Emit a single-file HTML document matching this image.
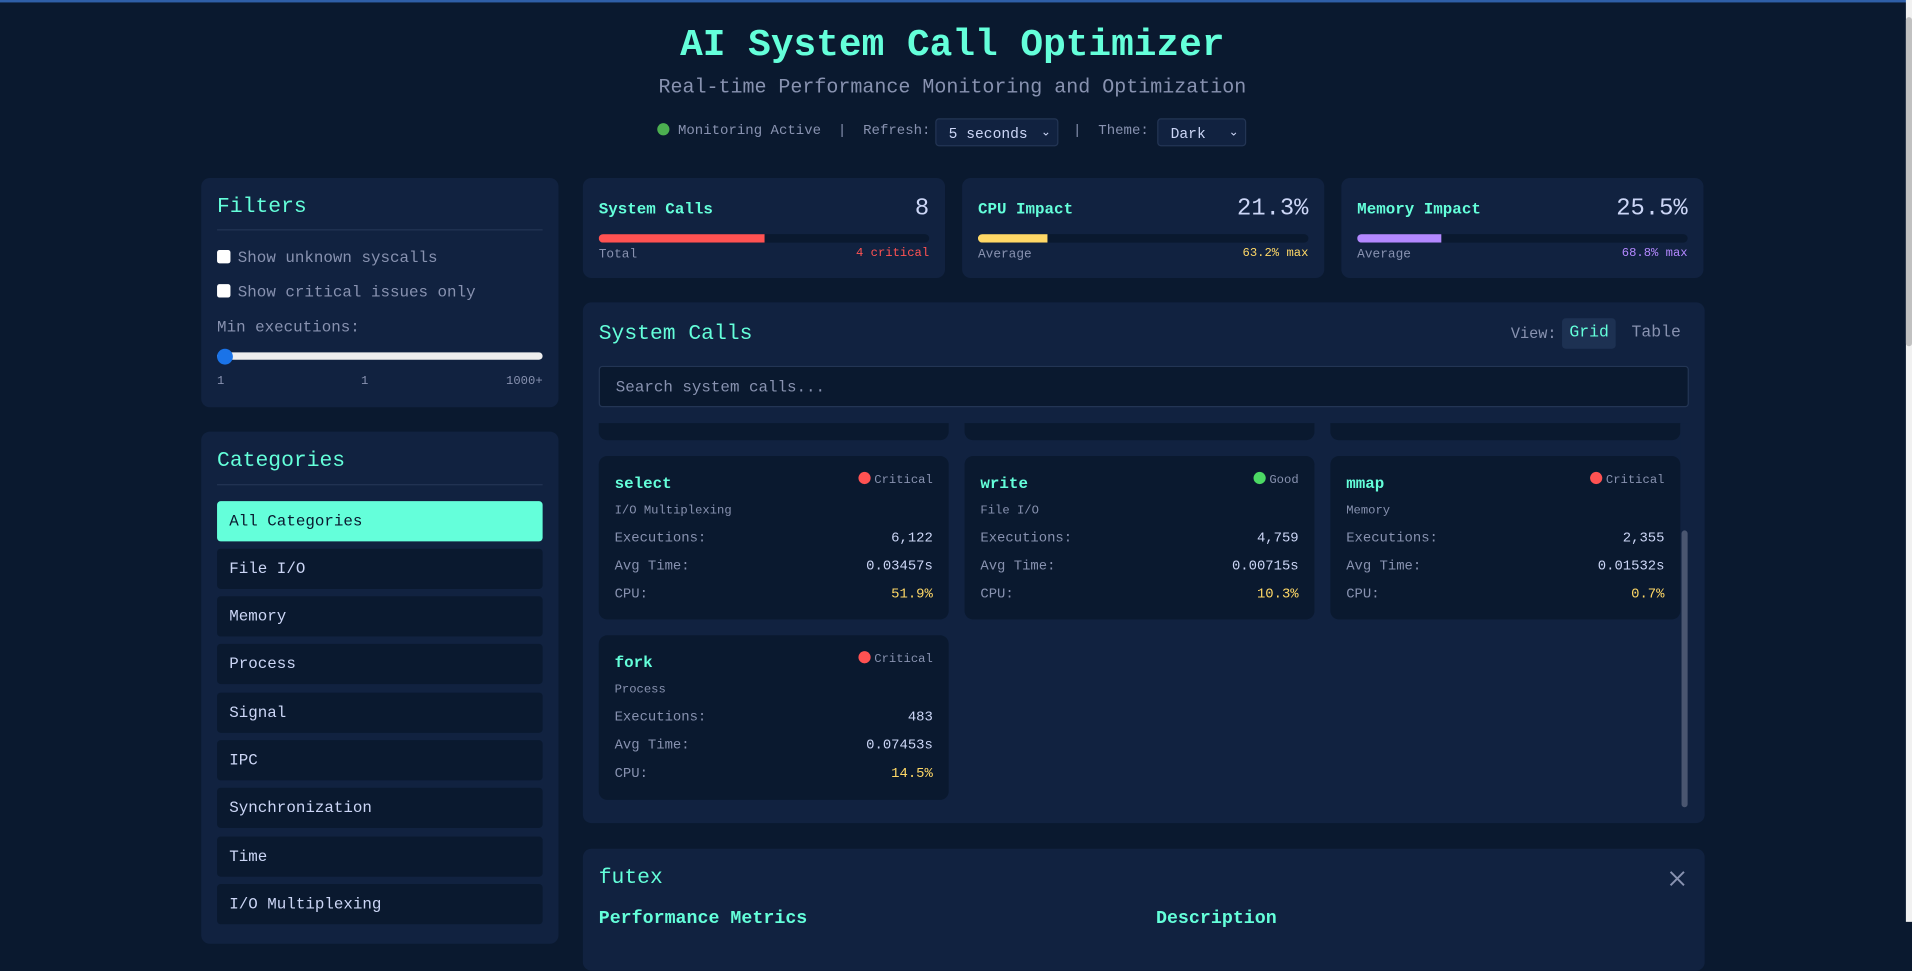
<!DOCTYPE html>
<html><head><meta charset="utf-8"><style>
*{box-sizing:border-box;margin:0;padding:0}
html,body{width:1912px;height:922px;overflow:hidden;background:#0a192f}
#w{position:absolute;left:0;top:0;width:1568px;height:756px;transform:scale(1.219388);transform-origin:0 0;font-family:"Liberation Mono",monospace;color:#ccd6f6}
.a{position:absolute}
.p{position:absolute;background:#112240;border-radius:7px}
.acc{color:#64ffda}
.mut{color:#8892b0}
.sel{position:absolute;background:#112240;border:1px solid #233554;border-radius:3px;font-size:12px;color:#ccd6f6;padding:5px 10px}
.cat{position:absolute;left:13px;width:267px;height:33px;background:#0a192f;border-radius:3px;font-size:13px;padding:9px 10px;color:#ccd6f6}
.card{position:absolute;width:287px;background:#0a192f;border-radius:7px;overflow:hidden}
.nm{position:absolute;left:13px;top:15px;font-size:13px;font-weight:bold;color:#64ffda}
.st{position:absolute;right:13px;top:13px;font-size:10px;color:#8892b0}
.dot{display:inline-block;width:10px;height:10px;border-radius:50%;margin-right:3px;vertical-align:-1px}
.cg{position:absolute;left:13px;top:40px;font-size:10px;color:#8892b0}
.r{position:absolute;left:13px;right:13px;font-size:11.4px;color:#8892b0}
.r b{position:absolute;right:0;font-weight:normal;color:#ccd6f6}
.stat{position:absolute;top:146px;width:297px;height:82px}
.stat .t{position:absolute;left:13px;top:18px;font-size:13px;font-weight:bold;color:#64ffda}
.stat .v{position:absolute;right:13px;top:14px;font-size:19.5px;color:#ccd6f6}
.bar{position:absolute;left:13px;right:13px;top:46px;height:7px;background:#0a192f;border-radius:4px;overflow:hidden}
.bar i{display:block;height:100%}
.stat .l{position:absolute;left:13px;top:57px;font-size:10.5px;color:#8892b0}
.stat .rr{position:absolute;right:13px;top:57px;font-size:10px}
</style></head><body><div id="w">
<div class="a" style="left:0;top:0;width:1568px;height:2px;background:#2f5fa8"></div>
<div class="a" style="left:1563px;top:0;width:5px;height:756px;background:#f1f1f1"></div>
<div class="a" style="left:1563px;top:14px;width:5px;height:270px;background:#c1c1c1;border-radius:3px"></div>
<div class="a acc" style="left:0;width:1562px;top:20px;text-align:center;font-size:31px;font-weight:bold">AI System Call Optimizer</div>
<div class="a mut" style="left:0;width:1562px;top:62px;text-align:center;font-size:16.4px">Real-time Performance Monitoring and Optimization</div>
<div class="a mut" style="left:539px;top:101px;font-size:11.5px;white-space:pre"><span class="dot" style="background:#4caf50;width:10px;height:10px;margin-right:7px"></span>Monitoring Active  |  Refresh:</div>
<div class="sel" style="left:767px;top:97px;width:101px;height:23px">5 seconds<span style="position:absolute;right:5px;font-size:10px;top:5px">⌄</span></div>
<div class="a mut" style="left:880px;top:101px;font-size:11.5px;white-space:pre">|  Theme:</div>
<div class="sel" style="left:949px;top:97px;width:73px;height:23px">Dark<span style="position:absolute;right:5px;font-size:10px;top:5px">⌄</span></div>

<div class="p" style="left:165px;top:146px;width:293px;height:188px">
<div class="a acc" style="left:13px;top:14px;font-size:17.5px">Filters</div>
<div class="a" style="left:13px;top:42px;width:267px;height:1px;background:#233554"></div>
<div class="a mut" style="left:13px;top:58px;font-size:13px"><span style="display:inline-block;width:11px;height:11px;background:#fff;border-radius:2px;margin-right:6px;vertical-align:-1px"></span>Show unknown syscalls</div>
<div class="a mut" style="left:13px;top:86px;font-size:13px"><span style="display:inline-block;width:11px;height:11px;background:#fff;border-radius:2px;margin-right:6px;vertical-align:-1px"></span>Show critical issues only</div>
<div class="a mut" style="left:13px;top:115px;font-size:13px">Min executions:</div>
<div class="a" style="left:13px;top:143px;width:267px;height:6px;background:#eee;border-radius:3px"></div>
<div class="a" style="left:13px;top:140px;width:13px;height:13px;background:#1a73e8;border-radius:50%"></div>
<div class="a mut" style="left:13px;top:162px;font-size:10px">1</div>
<div class="a mut" style="left:131px;top:162px;font-size:10px">1</div>
<div class="a mut" style="left:250px;top:162px;font-size:10px">1000+</div>
</div>

<div class="p" style="left:165px;top:354px;width:293px;height:420px">
<div class="a acc" style="left:13px;top:14px;font-size:17.5px">Categories</div>
<div class="a" style="left:13px;top:43px;width:267px;height:1px;background:#233554"></div>
<div class="cat" style="top:57px;background:#64ffda;color:#0a192f">All Categories</div>
<div class="cat" style="top:96px">File I/O</div>
<div class="cat" style="top:135px">Memory</div>
<div class="cat" style="top:174px">Process</div>
<div class="cat" style="top:214px">Signal</div>
<div class="cat" style="top:253px">IPC</div>
<div class="cat" style="top:292px">Synchronization</div>
<div class="cat" style="top:332px">Time</div>
<div class="cat" style="top:371px">I/O Multiplexing</div>
</div>

<div class="p stat" style="left:478px"><div class="t">System Calls</div><div class="v">8</div><div class="bar"><i style="width:50%;background:#ff5252"></i></div><div class="l">Total</div><div class="rr" style="color:#ff5252">4 critical</div></div>
<div class="p stat" style="left:789px"><div class="t">CPU Impact</div><div class="v">21.3%</div><div class="bar"><i style="width:21%;background:#ffd866"></i></div><div class="l">Average</div><div class="rr" style="color:#ffd866">63.2% max</div></div>
<div class="p stat" style="left:1100px"><div class="t">Memory Impact</div><div class="v">25.5%</div><div class="bar"><i style="width:25.6%;background:#b388ff"></i></div><div class="l">Average</div><div class="rr" style="color:#b388ff">68.8% max</div></div>

<div class="p" style="left:478px;top:248px;width:920px;height:427px">
<div class="a acc" style="left:13px;top:16px;font-size:17.5px">System Calls</div>
<div class="a mut" style="left:761px;top:19px;font-size:12.5px">View:</div>
<div class="a acc" style="left:803px;top:13px;width:44px;height:25px;background:#1d3152;border-radius:3px;font-size:13.5px;padding:5px 6px">Grid</div>
<div class="a mut" style="left:860px;top:18px;font-size:13.5px">Table</div>
<div class="a" style="left:13px;top:52px;width:894px;height:34px;background:#0a192f;border:1px solid #233554;border-radius:3px;font-size:13px;color:#8892b0;padding:9px 13px">Search system calls...</div>
<div class="card" style="left:13px;top:99px;height:14px;border-radius:0 0 7px 7px"></div>
<div class="card" style="left:313px;top:99px;height:14px;border-radius:0 0 7px 7px"></div>
<div class="card" style="left:613px;top:99px;height:14px;border-radius:0 0 7px 7px"></div>
<div class="a" style="left:900px;top:99px;width:7px;height:315px;background:#112240"></div>
<div class="a" style="left:901px;top:187px;width:5px;height:227px;background:#4a5670;border-radius:3px"></div>

<div class="card" style="left:13px;top:126px;height:134px"><div class="nm">select</div><div class="st"><span class="dot" style="background:#ff5252"></span>Critical</div><div class="cg">I/O Multiplexing</div>
<div class="r" style="top:62px">Executions:<b>6,122</b></div><div class="r" style="top:85px">Avg Time:<b>0.03457s</b></div><div class="r" style="top:108px">CPU:<b style="color:#ffd866">51.9%</b></div></div>
<div class="card" style="left:313px;top:126px;height:134px"><div class="nm">write</div><div class="st"><span class="dot" style="background:#4cd964"></span>Good</div><div class="cg">File I/O</div>
<div class="r" style="top:62px">Executions:<b>4,759</b></div><div class="r" style="top:85px">Avg Time:<b>0.00715s</b></div><div class="r" style="top:108px">CPU:<b style="color:#ffd866">10.3%</b></div></div>
<div class="card" style="left:613px;top:126px;height:134px"><div class="nm">mmap</div><div class="st"><span class="dot" style="background:#ff5252"></span>Critical</div><div class="cg">Memory</div>
<div class="r" style="top:62px">Executions:<b>2,355</b></div><div class="r" style="top:85px">Avg Time:<b>0.01532s</b></div><div class="r" style="top:108px">CPU:<b style="color:#ffd866">0.7%</b></div></div>
<div class="card" style="left:13px;top:273px;height:135px"><div class="nm">fork</div><div class="st"><span class="dot" style="background:#ff5252"></span>Critical</div><div class="cg">Process</div>
<div class="r" style="top:62px">Executions:<b>483</b></div><div class="r" style="top:85px">Avg Time:<b>0.07453s</b></div><div class="r" style="top:108px">CPU:<b style="color:#ffd866">14.5%</b></div></div>
</div>

<div class="p" style="left:478px;top:696px;width:920px;height:100px">
<div class="a acc" style="left:13px;top:14px;font-size:17.5px">futex</div>
<svg class="a" style="left:891px;top:18px" width="13" height="13" viewBox="0 0 13 13"><path d="M1 1L12 12M12 1L1 12" stroke="#8892b0" stroke-width="1.6"/></svg>
<div class="a acc" style="left:13px;top:49px;font-size:15px;font-weight:bold">Performance Metrics</div>
<div class="a acc" style="left:470px;top:49px;font-size:15px;font-weight:bold">Description</div>
</div>
</div></body></html>
